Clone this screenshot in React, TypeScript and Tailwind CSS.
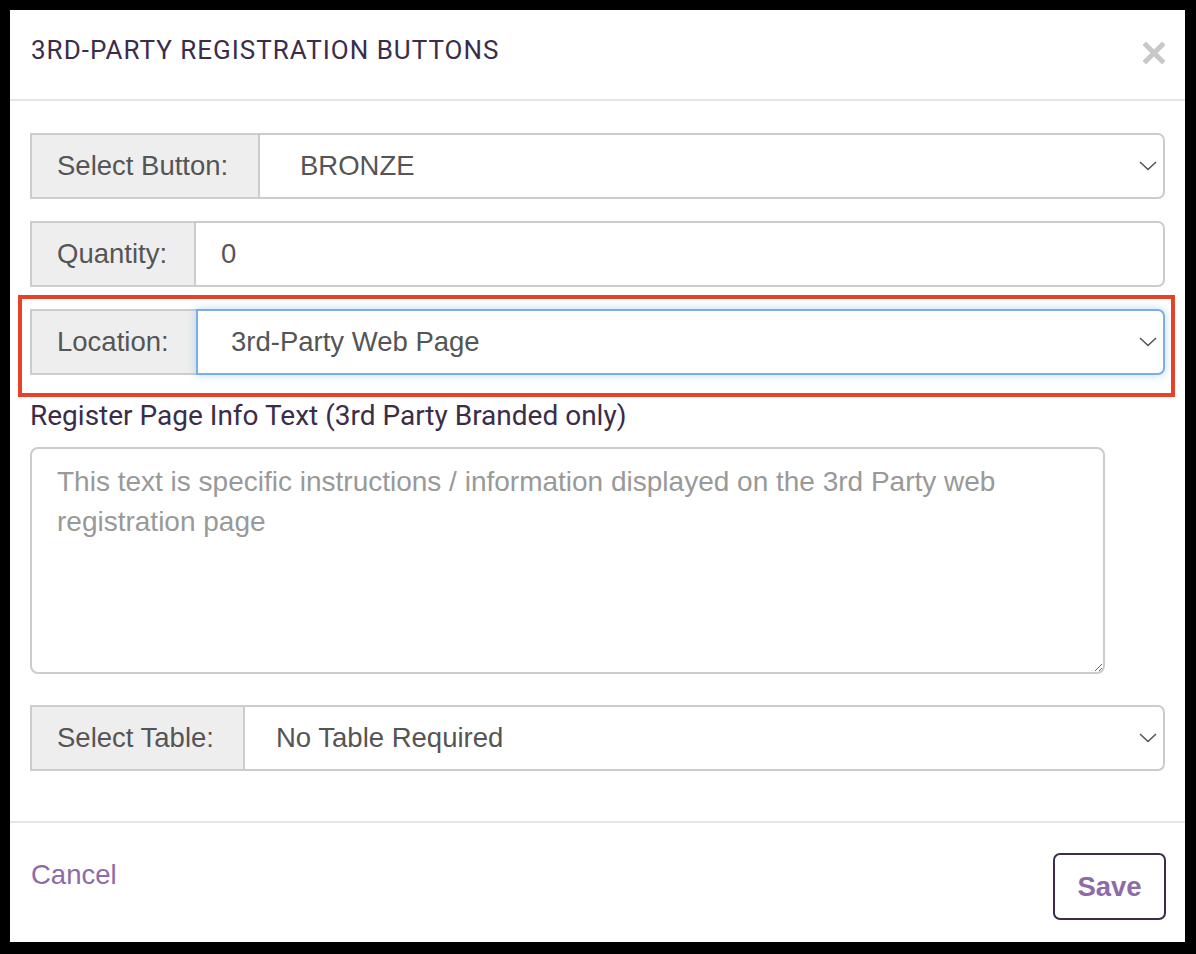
import { ReactNode } from "react";

const ui = { fontFamily: '"Liberation Sans", Arial, sans-serif' };
const roboto = { fontFamily: 'Roboto, "Liberation Sans", sans-serif' };

const Chevron = () => (
  <svg width="18" height="10" viewBox="0 0 18 10" fill="none" className="shrink-0">
    <path d="M1 1l8 7.5L17 1" stroke="#555" strokeWidth="1.6" />
  </svg>
);

const CloseIcon = () => (
  <svg width="22" height="22" viewBox="0 0 22 22">
    <path d="M3 3l16 16M19 3L3 19" stroke="#c8c8c8" strokeWidth="5" strokeLinecap="square" />
  </svg>
);

const InputGroup = ({
  label,
  addonClass,
  fieldClass,
  children,
  select = true,
}: {
  label: string;
  addonClass: string;
  fieldClass: string;
  children: ReactNode;
  select?: boolean;
}) => (
  <div className="flex h-[66px] w-full text-[27.5px] text-[#555]" style={ui}>
    <div
      className={`flex items-center border-2 border-r-0 border-[#cccccc] bg-[#eeeeee] ${addonClass}`}
    >
      {label}
    </div>
    <div
      className={`flex flex-1 items-center justify-between rounded-r-[7px] border-2 bg-white ${fieldClass}`}
    >
      <span>{children}</span>
      {select && <Chevron />}
    </div>
  </div>
);

export default function App() {
  return (
    <div className="h-[954px] w-[1196px] bg-black pl-[10px] pr-[11px] pt-[10px] pb-[12px]">
      <div className="flex h-full flex-col bg-white">
        {/* header */}
        <div className="flex h-[91px] items-center justify-between border-b-2 border-[#e5e5e5] pl-[21px] pr-[20px]">
          <h2
            className="pb-[8px] text-[26px] font-normal tracking-[1px] text-[#3b2d4a]"
            style={roboto}
          >
            3RD-PARTY REGISTRATION BUTTONS
          </h2>
          <button className="mb-[3px]">
            <CloseIcon />
          </button>
        </div>

        {/* body */}
        <div className="flex flex-col px-[20px] pt-[32px] pb-[50px]">
          <div className="flex flex-col gap-[22px]">
            <InputGroup
              label="Select Button:"
              addonClass="w-[228px] pl-[25px]"
              fieldClass="border-[#cccccc] pl-[40px] pr-[6px]"
            >
              BRONZE
            </InputGroup>
            <InputGroup
              label="Quantity:"
              addonClass="w-[164px] pl-[25px]"
              fieldClass="border-[#cccccc] pl-[25px] pr-[6px]"
              select={false}
            >
              0
            </InputGroup>
            <div className="relative">
              <InputGroup
                label="Location:"
                addonClass="w-[166px] pl-[25px]"
                fieldClass="border-[#7aaeea] pl-[33px] pr-[6px] shadow-[0_0_10px_rgba(102,175,233,0.45)]"
              >
                3rd-Party Web Page
              </InputGroup>
              <div className="pointer-events-none absolute -left-[12px] -right-[10px] -top-[14px] -bottom-[22px] border-4 border-[#e8412a]" />
            </div>
          </div>

          <label
            className="mt-[22px] mb-[12px] block text-[28px] leading-[38px] text-[#3b2d4a]"
            style={roboto}
          >
            Register Page Info Text (3rd Party Branded only)
          </label>
          <textarea
            className="h-[227px] w-[1075px] rounded-[8px] border-2 border-[#cccccc] px-[25px] pt-[13px] text-[28px] leading-[40px] text-[#555] outline-none placeholder:text-[#999999]"
            style={ui}
            placeholder="This text is specific instructions / information displayed on the 3rd Party web registration page"
          />

          <div className="mt-[31px]">
            <InputGroup
              label="Select Table:"
              addonClass="w-[213px] pl-[25px]"
              fieldClass="border-[#cccccc] pl-[31px] pr-[6px]"
            >
              No Table Required
            </InputGroup>
          </div>
        </div>

        {/* footer */}
        <div className="flex flex-1 items-start justify-between border-t-2 border-[#e5e5e5] pl-[21px] pr-[19px] pt-[30px]">
          <a className="mt-[3px] text-[27.5px] leading-[38px] text-[#8e6aa6]" style={ui}>
            Cancel
          </a>
          <button
            className="h-[67px] w-[113px] rounded-[7px] border-2 border-[#3b2d4a] text-[27.5px] font-bold text-[#8e6aa6]"
            style={ui}
          >
            Save
          </button>
        </div>
      </div>
    </div>
  );
}
